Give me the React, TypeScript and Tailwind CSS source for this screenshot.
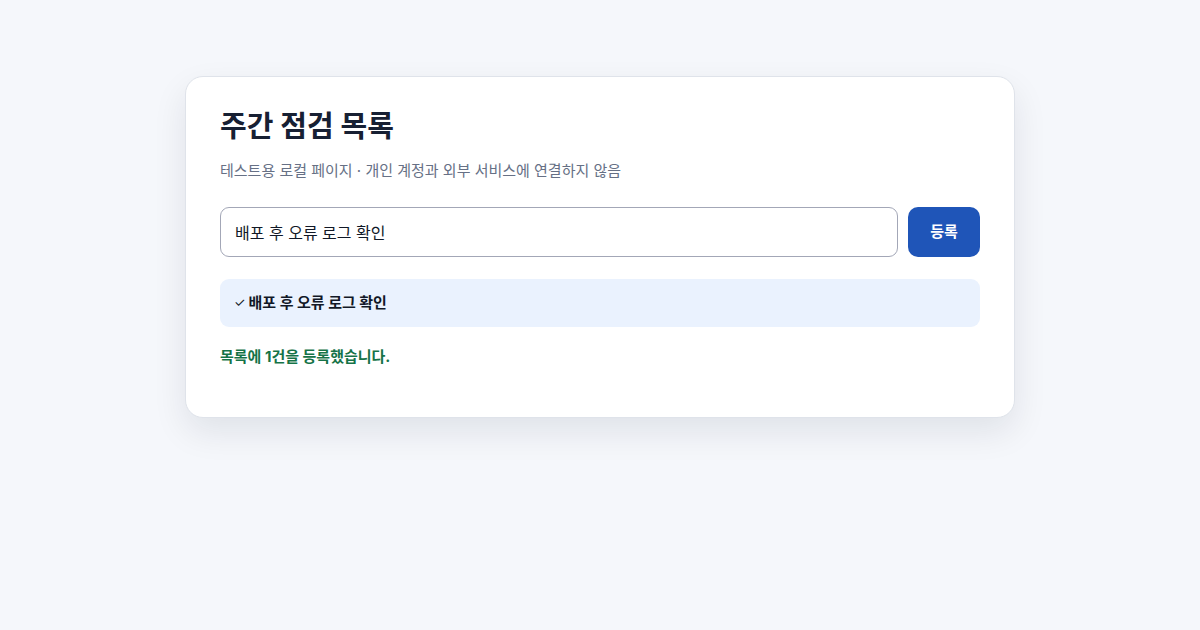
import React, { useState } from "react";

const App: React.FC = () => {
    const [text, setText] = useState<string>("배포 후 오류 로그 확인");
    const [items, setItems] = useState<string[]>(["배포 후 오류 로그 확인"]);
    const [message, setMessage] = useState<string>("목록에 1건을 등록했습니다.");

    const addItem = () => {
        const value = text.trim();
        if (!value) return;
        const next = [...items, value];
        setItems(next);
        setMessage(`목록에 ${next.length}건을 등록했습니다.`);
    };

    return (
        <div
            className="min-h-screen bg-[#f5f7fb] pt-[76px]"
            style={{ fontFamily: 'Inter, "Noto Sans CJK KR", sans-serif' }}
        >
            {/* 카드 */}
            <div className="mx-auto w-[830px] rounded-[18px] border border-[#dfe3ea] bg-white px-[34px] pt-[32px] pb-[49px] shadow-[0_14px_34px_rgba(15,23,42,0.09)]">
                <h1 className="text-[29px] font-bold leading-[36px] text-[#172033]">주간 점검 목록</h1>
                <p className="mt-[15px] text-[15px] leading-[22px] text-[#667085]">
                    테스트용 로컬 페이지 · 개인 계정과 외부 서비스에 연결하지 않음
                </p>

                {/* 입력 */}
                <div className="mt-[25px] flex gap-[10px]">
                    <input
                        type="text"
                        value={text}
                        onChange={(e) => setText(e.target.value)}
                        className="h-[50px] flex-1 rounded-[9px] border border-[#a3a7b7] px-[14px] text-[16px] text-[#111827] outline-none"
                    />
                    <button
                        onClick={addItem}
                        className="h-[50px] w-[72px] rounded-[10px] bg-[#1f55b8] text-[15px] font-bold text-white"
                    >
                        등록
                    </button>
                </div>

                {/* 목록 */}
                <ul className="mt-[22px] flex flex-col gap-2">
                    {items.map((item, i) => (
                        <li
                            key={i}
                            className="flex h-[48px] items-center rounded-[9px] bg-[#eaf2fe] px-[14px] text-[15px] font-bold text-[#111827]"
                        >
                            <span className="mr-[3px] text-[13px] font-normal">✓</span>
                            {item}
                        </li>
                    ))}
                </ul>

                <p className="mt-[19px] text-[15px] font-bold leading-[22px] text-[#157347]">{message}</p>
            </div>
        </div>
    );
};

export default App;
